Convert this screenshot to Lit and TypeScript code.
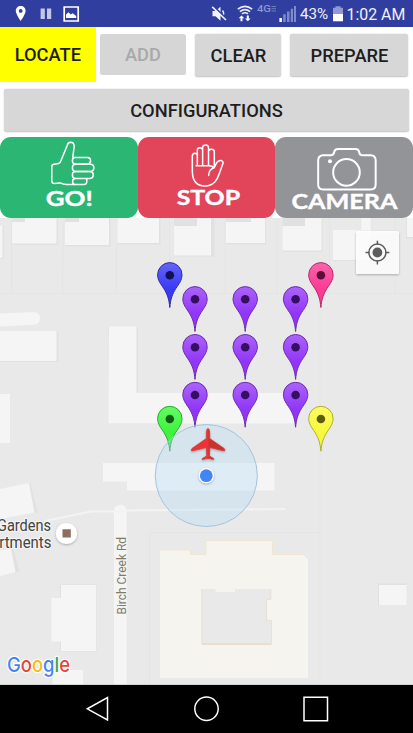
import { LitElement, html, svg, css } from "lit";
import { customElement } from "lit/decorators.js";

interface Pin {
  x: number;
  y: number;
  color: string;
}

const PINS: Pin[] = [
  { x: 169.8, y: 275.3, color: "blue" },
  { x: 320.9, y: 275.3, color: "pink" },
  ...[299.3, 347.2, 395].flatMap((y) =>
    [195, 245.2, 295.6].map((x) => ({ x, y, color: "purple" }))
  ),
  { x: 169.8, y: 419, color: "green" },
  { x: 320.9, y: 419, color: "yellow" },
];

const COLORS: Record<string, { top: string; bottom: string; line: string; dot: string }> = {
  blue: { top: "#6464fb", bottom: "#3a3af4", line: "#2c2c9c", dot: "#121253" },
  pink: { top: "#fb64ac", bottom: "#fb3a94", line: "#b02a6a", dot: "#5c0f36" },
  purple: { top: "#ac64fb", bottom: "#9136f7", line: "#6a2cae", dot: "#361060" },
  green: { top: "#64fb64", bottom: "#3cf43c", line: "#2da535", dot: "#0f5c14" },
  yellow: { top: "#fbfb64", bottom: "#f8f83a", line: "#adad36", dot: "#5c5c0f" },
};

@customElement("status-bar")
export class StatusBar extends LitElement {
  static styles = css`
    :host {
      display: flex;
      align-items: center;
      height: 27px;
      box-sizing: border-box;
      background: #303f9f;
      color: #f1f2fa;
      font: 400 15.6px/27px Roboto, sans-serif;
      white-space: nowrap;
      flex: none;
    }
    svg { display: block; flex: none; }
    .left { width: 211px; }
    .mid { width: 89px; }
    .percent { width: 32px; font-size: 15.2px; padding-top: 2px; }
    .clock { font-size: 15.9px; padding-top: 2px; }
  `;
  render() {
    return html`
      <svg class="left" height="27" viewBox="0 0 211 27">
        <path d="M20.7 6c-2.9 0-4.9 2.1-4.9 4.8 0 3.6 4.9 10.2 4.9 10.2s4.9-6.6 4.9-10.2c0-2.7-2-4.8-4.9-4.8zm0 3a1.9 1.9 0 1 1 0 3.8 1.9 1.9 0 0 1 0-3.8z" fill="#fff" fill-rule="evenodd" />
        <path d="M40.600 8.500h4.200v10.500h-4.200zM47 8.500h4.200v10.500H47z" fill="#c3c8e6" />
        <path d="M64.200 7h14v14h-14z" fill="none" stroke="#fff" stroke-width="1.700" />
        <path d="M66 18v-3.600l2.500-2.200 2.200 2.300 2-1.200 3.500 2.600V18z" fill="#fff" />
      </svg>
      <svg class="mid" height="27" viewBox="211 0 89 27">
        <path d="M212.500 11h3l5-4.300v14l-5-4.500h-3z" fill="#f1f2fa" />
        <path d="M222.500 10.500q2.300 3 0 6.300" fill="none" stroke="#f1f2fa" stroke-width="1.400" />
        <path d="M213.200 6.300L227 19.300" stroke="#303f9f" stroke-width="2" />
        <path d="M212.200 6.800L226 20" stroke="#f1f2fa" stroke-width="1.600" />
        <g fill="none" stroke="#e8eaf6" stroke-width="1.700">
          <path d="M237.800 9.200q7.200-5.600 14.400 0" />
          <path d="M239.900 11.600q5.100-4 10.200 0" />
          <path d="M242 13.900q3-2.300 6 0" />
        </g>
        <path d="M238.700 18.200l2.800-2.800 2.800 2.800h-1.800v3h-2v-3zM245 18.400h1.800v-3h2v3h1.800l-2.800 2.800z" fill="#fff" />
        <text x="257" y="12.300" font-size="9.500" font-weight="500" fill="#8c95cd" textLength="14" lengthAdjust="spacingAndGlyphs">4G</text>
        <path d="M271.500 6.500h4.500M271.500 8.700h4.500M271.500 11h4.500" stroke="#6f7abf" stroke-width="1" />
        <path d="M279.400 18h2.500v4h-2.500z" fill="#fff" />
        <path d="M283.200 14.300h2.500V22h-2.500zM287 11.500h2.500V22H287zM290.800 8.700h2.200V22h-2.200zM294 6h2V22h-2z" fill="#7f8aca" />
      </svg>
      <span class="percent">43%</span>
      <svg width="14.500" height="27" viewBox="332 0 14.500 27">
        <path d="M335.500 6.200h5v1.600h2.500v6h-10v-6h2.500z" fill="#8f98d0" />
        <path d="M333 13.800h10V21.300h-10z" fill="#fff" />
      </svg>
      <span class="clock">1:02 AM</span>
    `;
  }
}

@customElement("action-tiles")
export class ActionTiles extends LitElement {
  static styles = css`
    :host { display: grid; grid-template-columns: repeat(3, 1fr); height: 81px; flex: none; }
    .tile { border-radius: 11px; overflow: hidden; height: 80.5px; }
    .go { background: #2bb673; }
    .stop { background: #e24559; }
    .camera { background: #939498; }
    svg { display: block; width: 100%; height: 80px; fill: none; stroke: #fff; stroke-width: 1.5; stroke-linejoin: round; stroke-linecap: round; }
    .camera svg { stroke-width: 2; }
    text { font-family: Lato, sans-serif; font-weight: 700; fill: #fff; stroke: #fff; stroke-width: 0.4px; }
    .solid { fill: #fff; stroke: none; }
  `;
  render() {
    return html`
      <div class="tile go">
        <svg viewBox="0 137 137.670 80">
          <path d="M72.800 157.300L74.200 146.500Q74.300 142.300 70.600 142.200Q67.800 142.200 67.200 145.500L60.300 162.300Q59 164 56 164.100L54 164.200Q51.800 164.400 51.800 166.500V181Q51.900 183.600 54.500 183.600Q59.500 182.500 61.500 183.300Q63.500 184.400 67 184.400H84.500Q86.800 184.300 86.800 181.500V178.600" />
          <path d="M74.500 157.400H87.500Q90.600 157.600 90.600 160.600T87.500 164.200H75Q72.400 163.800 72.400 160.800T74.500 157.400Z" />
          <path d="M75 164.200H90.500Q93.900 164.400 93.900 167.800T90.500 171.500H75Q72.400 171 72.400 167.800T75 164.200Z" />
          <path d="M75 171.500H90Q93.300 171.800 93.300 175T90 178.500H75Q72.400 178.200 72.400 175T75 171.500Z" />
          <path d="M75 178.500Q72.600 179 72.600 181.500T74.500 184.400" />
          <text x="45.700" y="205.600" font-size="21.500" textLength="47" lengthAdjust="spacingAndGlyphs">GO!</text>
        </svg>
      </div>
      <div class="tile stop">
        <svg viewBox="137.670 137 137.670 80">
          <path d="M192 171V156Q192 153.400 194.500 153.300Q196.900 153.300 197 155.500V165V150Q197.100 147.700 199.500 147.700Q202 147.700 202.300 150V165V147.500Q202.500 145 205.200 145Q207.900 145 208.200 147.500V165V151.500Q208.400 149.200 211 149.200Q213.900 149.200 214 151.500V167.500L216.500 162.500Q218.300 160.200 221 160.600Q223.300 161.500 222.600 163.500L219 173.500Q217.500 178.500 214.500 182Q210.500 186.100 204.500 186Q192 185.800 192 171Z" />
          <path d="M195.800 165.700H208.200Q212 165.600 213.800 167.500M214 167.500Q208.300 169.500 208.300 175.500" />
          <text x="176.300" y="205" font-size="21" textLength="63.500" lengthAdjust="spacingAndGlyphs">STOP</text>
        </svg>
      </div>
      <div class="tile camera">
        <svg viewBox="275.330 137 137.670 80">
          <path d="M323.500 155.200H331Q334.200 155.200 334.500 152.200Q335 149 338.500 149H355.500Q359.200 149 359.600 152.500Q360 155.200 363 155.200H371Q376 155.400 376 160.500V184.500Q376 189.400 371 189.500H323.500Q318.500 189.400 318.500 184.500V160.500Q318.500 155.400 323.500 155.200Z" />
          <circle cx="346.800" cy="172.400" r="13.300" />
          <circle class="solid" cx="330.300" cy="161.200" r="2" />
          <text x="291.800" y="208.700" font-size="21" textLength="106" lengthAdjust="spacingAndGlyphs">CAMERA</text>
        </svg>
      </div>
    `;
  }
}

@customElement("map-view")
export class MapView extends LitElement {
  static styles = css`
    :host { display: block; flex: none; height: 467px; background: #e9e9e9; overflow: hidden; }
    svg { display: block; width: 413px; height: 467px; font-family: Roboto, sans-serif; }
    .lot { fill: none; stroke: #e3e3e3; stroke-width: 1; }
    .shade { fill: #e1e1e1; }
    .building { fill: #f5f5f5; }
    .halo { paint-order: stroke; stroke: #f4f4f4; stroke-width: 2.5px; stroke-linejoin: round; }
    .place { fill: #434343; font-size: 16px; text-anchor: end; }
    .road { fill: #7f7b67; font-size: 13px; }
    .logo { font-family: Inter, sans-serif; font-size: 20.5px; font-weight: 500; stroke: #fff; stroke-width: 2.5px; }
  `;

  private pin({ x, y, color }: Pin) {
    const c = COLORS[color];
    return svg`<g transform="translate(${x} ${y})">
      <path d="M0 32.200C-.8 23.500-2.500 19-6 13.300C-9 8.700-12.200 5-12.200-.5A12.200 12.200 0 0 1 12.200-.5C12.200 5 9 8.700 6 13.300C2.500 19 .8 23.500 0 32.200Z"
        fill="url(#pin-${color})" stroke=${c.line} stroke-width="1" />
      <circle r="4.300" fill=${c.dot} />
    </g>`;
  }

  render() {
    return html`
      <svg viewBox="0 218 413 467">
        <defs>
          ${Object.entries(COLORS).map(
            ([name, c]) => svg`<linearGradient id="pin-${name}" x1="0" y1="0" x2="0" y2="1">
              <stop offset="0" stop-color=${c.top} /><stop offset=".6" stop-color=${c.bottom} />
            </linearGradient>`
          )}
          <linearGradient id="plane" x1="0" x2="1"><stop offset=".5" stop-color="#ee3338" /><stop offset=".52" stop-color="#c9302f" /></linearGradient>
          <filter id="soft" x="-30%" y="-30%" width="160%" height="160%"><feDropShadow dx="0" dy="1" stdDeviation="1" flood-opacity=".3" /></filter>
        </defs>
        <path class="lot" d="M11.500 218V293.500M64 218L62.500 270V293.500M116.500 245V293.500M0 293.500H413M169.500 218V294M225 218V294M277 218V294M329.500 218V294M395 218V294M320 294V685M149.500 685V532.500H320" opacity=".8" />
        <g class="shade">
          <path d="M0 226H4V259H0zM12 218H58V245H12zM65 218H110.500V246.500H65zM117.500 218H160.500V244.500H117.500zM174 218H214.500V256.500H174zM226 218H266V244.500H226zM282.500 218H322.500V252H282.500zM333 230H360V261H333zM406 218H413V238.500H406z" />
          <path d="M0 332H58.500V362H0zM108.500 327H138V394H160V424H108.500zM30.500 483L37.500 512.500L34 513L28 484zM13.500 549.500L19.500 571.500L15 573L9 551z" />
          <path d="M60 584.500H96.500V651.500H60zM378 583.500H406V605H378z" />
        </g>
        <g class="building">
          <path d="M0 226H2.500V258H0zM12 222H25V218H56.500V243.500H12zM65 222H79V218H109V245H65zM117.500 218H159V243H117.500zM174 226H197V218H211V255.500H174zM226 222H251V218H265V243H226zM282.500 226H305V218H321.500V250.500H282.500zM333 230H361.500V218H370.500V260H333zM407 218H413V237H407z" />
          <path d="M0 313.500L34 312A6.300 6.300 0 0 1 35 324.500L0 326.500zM0 331H56.500V361H0zM0 394H10V443H0z" />
          <path d="M109 326.500H136.500V393H295.500V423.500H108.300z" />
          <path d="M103 463H274.500V490.500H127V481.500H103zM0 489L29 483L34.500 512.500L0 519zM0 550.500L11 549L15.500 572L0 576z" />
          <path d="M61 585H96V651H61V641.500H51.500V598H61zM52.500 670H83V685H52.500zM379 585H406.500V605H379zM114 685V511A6.300 6.300 0 0 1 126.700 511V685z" />
        </g>
        <path d="M45 521L91 511.500H114L126 510.500L285 509" fill="none" stroke="#f3f3f3" stroke-width="1.800" />
        <path d="M160 550H190.500V554H206V540.500H272.500V554H304L308 559V678H160zM202 589V644H271.500V620.500H266.500V599.500H271V589H235V592H215.500V589z" fill="#f6f4ef" fill-rule="evenodd" />
        <path d="M160 550H190.500V554.500H206V540.500H272.500V554.500H303.500L308 559" fill="none" stroke="#f0e4d2" />
        <path d="M202 644.200H271.500" stroke="#e9ddcb" stroke-width="1.700" />
        <path d="M201.800 644V589M271.500 644V620.500H266.500V599.300H270.800V589" fill="none" stroke="#e7e1d7" />
        <path d="M0 684.700H413" stroke="#bfc5c8" stroke-width=".8" />

        <circle cx="66.500" cy="533.500" r="10.600" fill="#fff" filter="url(#soft)" />
        <path d="M62.500 529.300h8.300v8.300h-8.300z" fill="#8d6e63" />
        <text class="place halo" x="51" y="531" textLength="54" lengthAdjust="spacingAndGlyphs">Gardens</text>
        <text class="place halo" x="51.300" y="548.300" textLength="52" lengthAdjust="spacingAndGlyphs">rtments</text>
        <text class="road halo" transform="translate(125.500 614.500) rotate(-90)" textLength="77.500" lengthAdjust="spacingAndGlyphs">Birch Creek Rd</text>
        <text class="logo halo" x="7" y="672" textLength="63" lengthAdjust="spacingAndGlyphs"><tspan fill="#4285f4">G</tspan><tspan fill="#ea4335">o</tspan><tspan fill="#fbbc05">o</tspan><tspan fill="#4285f4">g</tspan><tspan fill="#34a853">l</tspan><tspan fill="#ea4335">e</tspan></text>

        ${PINS.map((p) => this.pin(p))}

        <circle cx="206.300" cy="475.500" r="51" fill="#b3dcf5" fill-opacity=".35" stroke="#a3c4de" stroke-width="1" />
        <path d="M208 428.500C206.800 428.500 206.500 431 206.400 434V438.500L192 448.500Q190.800 450 191.800 451L206.300 447.500L206.800 456L202.300 458.500V459.500L208 458.300L213.700 459.500V458.500L209.400 456L209.900 447.500L224.400 451Q225.400 450 224.200 448.500L209.700 438.500V434C209.600 431 209.200 428.500 208 428.500Z" fill="url(#plane)" stroke="#d43a36" stroke-width=".8" filter="url(#soft)" />
        <circle cx="206.300" cy="475.700" r="7.600" fill="#fff" filter="url(#soft)" />
        <circle cx="206.300" cy="475.700" r="6.400" fill="#4285f4" />

        <rect x="356" y="231" width="43" height="43" rx="1.500" fill="#fff" fill-opacity=".88" filter="url(#soft)" />
        <g fill="none" stroke="#5c5c5c" stroke-width="1.500">
          <circle cx="377.400" cy="252.500" r="8.500" />
          <path d="M377.400 240.800v4M377.400 260.300v4.200M365.500 252.500h4M385.200 252.500h4.200" />
        </g>
        <circle cx="377.400" cy="252.500" r="4.900" fill="#5c5c5c" />
      </svg>
    `;
  }
}

@customElement("app-root")
export class AppRoot extends LitElement {
  static styles = css`
    :host { display: flex; flex-direction: column; width: 413px; height: 733px; overflow: hidden; background: #fff; }
    .row { display: flex; align-items: flex-start; height: 55px; flex: none; }
    .btn {
      display: flex; align-items: center; justify-content: center; box-sizing: border-box;
      height: 42px; border-radius: 2.5px; background: #d7d7d7; color: #1e1e1e;
      box-shadow: 0 0.5px 1.5px rgba(0, 0, 0, 0.25);
      font: 500 18.3px/1 Roboto, sans-serif; white-space: nowrap; padding-top: 2px;
    }
    .locate { width: 95.7px; height: 55px; border-radius: 0; background: #ff0; box-shadow: none; color: #1e1e05; }
    .add { width: 86px; height: 41px; margin: 7px 0 0 4.3px; background: #d6d6d6; color: #a9a9a9; box-shadow: none; }
    .clear { width: 86px; margin: 7px 0 0 9.5px; }
    .prepare { width: 118px; margin: 7px 0 0 9px; }
    .config { margin: 7px 4px 6px 4px; height: 42px; flex: none; }
    .nav { flex: 1; background: #000; }
    .nav svg { display: block; fill: none; stroke: #fff; stroke-width: 1.5; }
  `;
  render() {
    return html`
      <status-bar></status-bar>
      <div class="row">
        <div class="btn locate">LOCATE</div>
        <div class="btn add">ADD</div>
        <div class="btn clear">CLEAR</div>
        <div class="btn prepare">PREPARE</div>
      </div>
      <div class="btn config">CONFIGURATIONS</div>
      <action-tiles></action-tiles>
      <map-view></map-view>
      <div class="nav">
        <svg width="413" height="48" viewBox="0 685 413 48">
          <path d="M107.500 697.500V720L87.300 708.800z" />
          <circle cx="206.500" cy="708.800" r="11.700" />
          <path d="M304 697.200h23.500v23.500H304z" />
        </svg>
      </div>
    `;
  }
}
